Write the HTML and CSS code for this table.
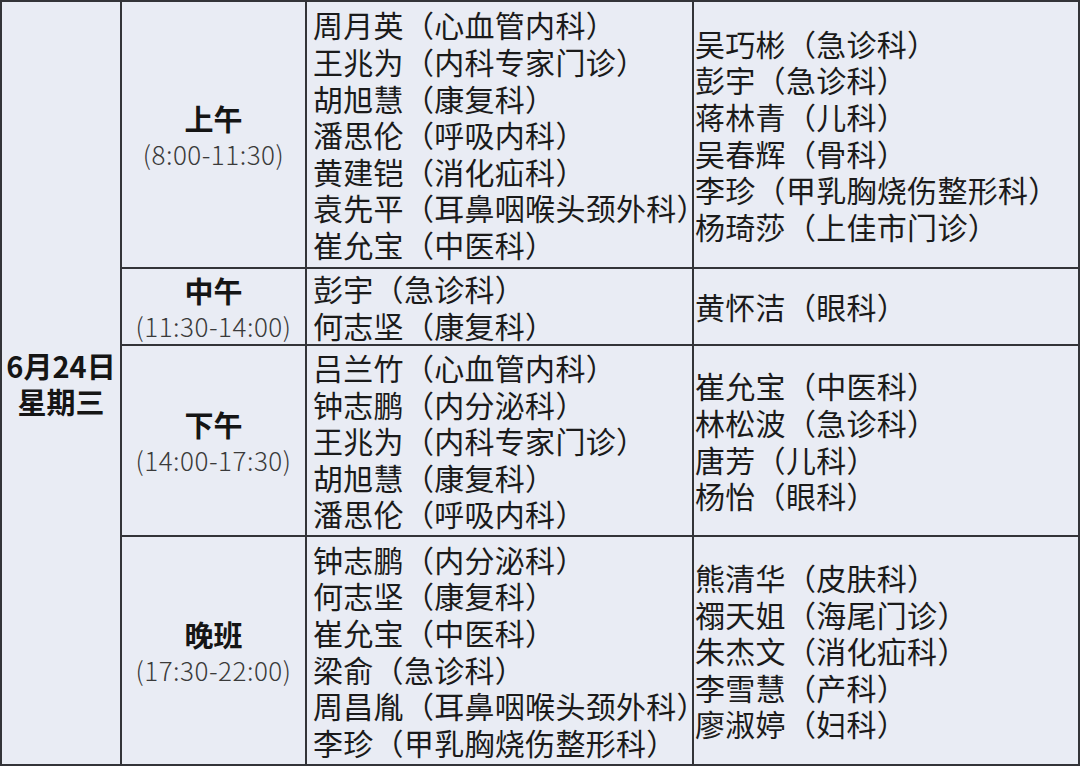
FILE: index.html
```html
<!DOCTYPE html>
<html lang="zh-CN">
<head>
<meta charset="utf-8">
<title>排班表</title>
<link rel="stylesheet" href="styles.css">
</head>
<body>
<div class="schedule">
  <div class="cell date">
    <div>6月24日</div>
    <div>星期三</div>
  </div>

  <div class="cell period r1">
    <div class="label">上午</div>
    <div class="time">(8:00-11:30)</div>
  </div>
  <div class="cell list left r1">
    <div>周月英（心血管内科）</div>
    <div>王兆为（内科专家门诊）</div>
    <div>胡旭慧（康复科）</div>
    <div>潘思伦（呼吸内科）</div>
    <div>黄建铠（消化疝科）</div>
    <div>袁先平（耳鼻咽喉头颈外科）</div>
    <div>崔允宝（中医科）</div>
  </div>
  <div class="cell list right r1">
    <div>吴巧彬（急诊科）</div>
    <div>彭宇（急诊科）</div>
    <div>蒋林青（儿科）</div>
    <div>吴春辉（骨科）</div>
    <div>李珍（甲乳胸烧伤整形科）</div>
    <div>杨琦莎（上佳市门诊）</div>
  </div>

  <div class="cell period r2">
    <div class="label">中午</div>
    <div class="time">(11:30-14:00)</div>
  </div>
  <div class="cell list left r2">
    <div>彭宇（急诊科）</div>
    <div>何志坚（康复科）</div>
  </div>
  <div class="cell list right r2">
    <div>黄怀洁（眼科）</div>
  </div>

  <div class="cell period r3">
    <div class="label">下午</div>
    <div class="time">(14:00-17:30)</div>
  </div>
  <div class="cell list left r3">
    <div>吕兰竹（心血管内科）</div>
    <div>钟志鹏（内分泌科）</div>
    <div>王兆为（内科专家门诊）</div>
    <div>胡旭慧（康复科）</div>
    <div>潘思伦（呼吸内科）</div>
  </div>
  <div class="cell list right r3">
    <div>崔允宝（中医科）</div>
    <div>林松波（急诊科）</div>
    <div>唐芳（儿科）</div>
    <div>杨怡（眼科）</div>
  </div>

  <div class="cell period r4">
    <div class="label">晚班</div>
    <div class="time">(17:30-22:00)</div>
  </div>
  <div class="cell list left r4">
    <div>钟志鹏（内分泌科）</div>
    <div>何志坚（康复科）</div>
    <div>崔允宝（中医科）</div>
    <div>梁俞（急诊科）</div>
    <div>周昌胤（耳鼻咽喉头颈外科）</div>
    <div>李珍（甲乳胸烧伤整形科）</div>
  </div>
  <div class="cell list right r4">
    <div>熊清华（皮肤科）</div>
    <div>禤天姐（海尾门诊）</div>
    <div>朱杰文（消化疝科）</div>
    <div>李雪慧（产科）</div>
    <div>廖淑婷（妇科）</div>
  </div>
</div>
</body>
</html>
```

FILE: styles.css
```css
html, body {
  margin: 0;
  padding: 0;
  background: #e9ecf4;
}

body {
  font-family: "Noto Sans CJK SC", "Noto Sans", sans-serif;
  color: #1b1b1b;
}

.schedule {
  width: 1080px;
  height: 766px;
  box-sizing: border-box;
  padding: 2px;
  background: #333438;
  display: grid;
  grid-template-columns: 118px 183px 385px 384px;
  grid-template-rows: 265px 75px 189px 227px;
  gap: 2px;
}

.cell {
  background: #e9ecf4;
  display: flex;
  flex-direction: column;
  justify-content: center;
}

.date {
  grid-column: 1;
  grid-row: 1 / 5;
  align-items: center;
  font-size: 29px;
  font-weight: 700;
  line-height: 36px;
  color: #151515;
}

.r1 { grid-row: 1; }
.r2 { grid-row: 2; }
.r3 { grid-row: 3; }
.r4 { grid-row: 4; }

.period {
  grid-column: 2;
  align-items: center;
  padding-top: 2px;
  box-sizing: border-box;
}

.period .label {
  font-size: 29px;
  font-weight: 700;
  line-height: 35px;
  color: #151515;
}

.period .time {
  font-size: 26px;
  font-weight: 300;
  line-height: 35px;
  letter-spacing: 0.5px;
  color: #3a3a3a;
}

.list {
  font-size: 30px;
  letter-spacing: 0.3px;
  line-height: 36.6px;
  white-space: nowrap;
}

.list.left {
  grid-column: 3;
  padding-left: 6px;
}

.list.right {
  grid-column: 4;
  padding-left: 1px;
}
```
